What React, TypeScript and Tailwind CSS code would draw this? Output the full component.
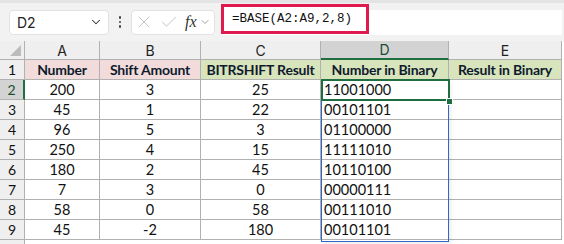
import { ChevronDown, X, Check } from 'lucide-react'

const cols = ['A', 'B', 'C', 'D', 'E']

const rows = [
  ['200', '3', '25', '11001000'],
  ['45', '1', '22', '00101101'],
  ['96', '5', '3', '01100000'],
  ['250', '4', '15', '11111010'],
  ['180', '2', '45', '10110100'],
  ['7', '3', '0', '00000111'],
  ['58', '0', '58', '00111010'],
  ['45', '-2', '180', '00101101'],
]

const grid = 'grid grid-cols-[25px_75px_101px_120px_128px_113px]'
const cell = 'border-r border-b border-[#b1b1b1] h-[20px] flex items-center'
const head = 'font-bold text-[14px] text-[#0f1b2d] tracking-[-0.2px]'

export default function App() {
  return (
    <div className="w-[564px] h-[244px] bg-white overflow-hidden font-['Lato','Open_Sans',sans-serif] text-[14.5px] text-[#111]">
      {/* formula bar */}
      <div className="h-[41px] bg-[#f2f2f2] border-t-[3px] border-[#e4e4e4] flex items-center pl-[9px] relative">
        <div className="w-[100px] h-[25px] bg-white rounded-[4px] border border-[#e2e2e2] flex items-center justify-between pl-[7px] pr-[5px]">
          <span className="text-[14px] text-[#222] font-['Inter',sans-serif]">D2</span>
          <ChevronDown size={14} strokeWidth={1.8} className="text-[#333]" />
        </div>
        <div className="w-[22px] flex flex-col items-center gap-[2px]">
          <span className="w-[2.5px] h-[2.5px] bg-[#444] rounded-full" />
          <span className="w-[2.5px] h-[2.5px] bg-[#444] rounded-full" />
          <span className="w-[2.5px] h-[2.5px] bg-[#444] rounded-full" />
        </div>
        <div className="w-[84px] h-[25px] bg-white rounded-[4px] border border-[#e2e2e2] flex items-center pl-[2px] gap-[5px]">
          <X size={20} strokeWidth={1.2} className="text-[#c4c4c4]" />
          <Check size={20} strokeWidth={1.2} className="text-[#c4c4c4]" />
          <span className="font-['Liberation_Serif',serif] italic text-[16px] text-[#333] ml-[1px]">fx</span>
          <ChevronDown size={12} strokeWidth={1.6} className="text-[#888] -ml-[3px]" />
        </div>
        <div className="ml-[6px] flex-1 h-[25px] bg-white mr-[2px]" />
        <div className="absolute left-[221px] top-[1px] w-[148px] h-[30px] border-[3px] border-[#e0194f] bg-white flex items-center pl-[8px]">
          <span className="font-['Liberation_Mono',monospace] text-[12.5px] text-[#111]">=BASE(A2:A9,2,8)</span>
        </div>
      </div>

      {/* sheet */}
      <div className="relative">
        <div className={grid}>
          <div className="h-[19px] bg-[#efefef] border-r border-b border-[#b1b1b1] relative overflow-hidden">
            <div className="absolute right-[3px] bottom-[3px] w-0 h-0 border-l-[11px] border-l-transparent border-b-[11px] border-b-[#bcbcbc]" />
          </div>
          {cols.map((c) =>
            c === 'D' ? (
              <div key={c} className="h-[19px] bg-[#d3d3d3] border-r border-[#b1b1b1] border-b-2 border-b-[#1e6e42] flex items-center justify-center text-[14px] text-[#1a4d31] font-['Inter',sans-serif]">
                {c}
              </div>
            ) : (
              <div key={c} className="h-[19px] bg-[#efefef] border-r border-b border-[#b1b1b1] flex items-center justify-center text-[14px] text-[#222] font-['Inter',sans-serif]">
                {c}
              </div>
            )
          )}

          <div className={`${cell} bg-[#efefef] justify-center text-[14px]`}>1</div>
          <div className={`${cell} bg-[#f2dcdb] justify-center ${head}`}>Number</div>
          <div className={`${cell} bg-[#f2dcdb] justify-center ${head}`}>Shift Amount</div>
          <div className={`${cell} bg-[#d8e4bc] justify-center ${head}`}>BITRSHIFT Result</div>
          <div className={`${cell} bg-[#d8e4bc] justify-center ${head}`}>Number in Binary</div>
          <div className={`${cell} bg-[#d8e4bc] justify-center ${head}`}>Result in Binary</div>

          {rows.map((r, i) => (
            <div key={i} className="contents">
              {i === 0 ? (
                <div className={`${cell} bg-[#d3d3d3] justify-center text-[14px] text-[#1a4d31] !border-r-2 !border-r-[#1e6e42]`}>{i + 2}</div>
              ) : (
                <div className={`${cell} bg-[#efefef] justify-center text-[14px]`}>{i + 2}</div>
              )}
              <div className={`${cell} justify-center`}>{r[0]}</div>
              <div className={`${cell} justify-center`}>{r[1]}</div>
              <div className={`${cell} justify-center`}>{r[2]}</div>
              <div className={`${cell} pl-[3px]`}>{r[3]}</div>
              <div className={cell} />
            </div>
          ))}

          <div className="h-[10px] bg-[#efefef] border-r border-[#b1b1b1]" />
        </div>

        {/* range and selection */}
        <div className="absolute left-[321px] top-[39px] w-[128px] h-[162px] border border-[#2f66c9] shadow-[2px_2px_4px_rgba(0,0,0,0.08)]" />
        <div className="absolute left-[321px] top-[38px] w-[129px] h-[22px] border-2 border-[#1e6e42]" />
        <div className="absolute left-[446px] top-[57px] w-[5px] h-[5px] bg-[#1e6e42] border border-white box-content" />
      </div>
    </div>
  )
}
